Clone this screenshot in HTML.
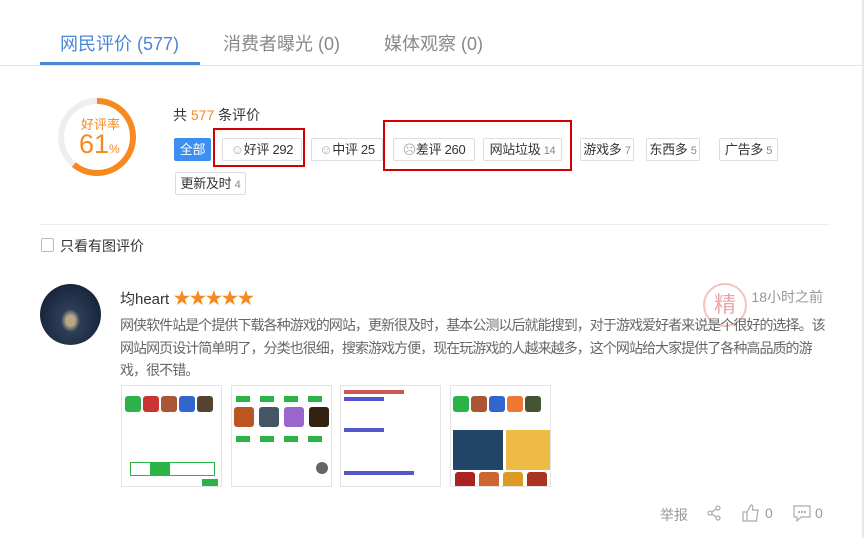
<!DOCTYPE html>
<html><head><meta charset="utf-8"><style>
*{margin:0;padding:0;box-sizing:border-box}
body{width:864px;height:538px;background:#fff;font-family:"Liberation Sans","Noto Sans CJK SC",sans-serif;position:relative;overflow:hidden;color:#333}
.a{position:absolute;white-space:nowrap}
.tab{font-size:18px;color:#888;top:30px}
.tag{position:absolute;top:138px;height:23px;border:1px solid #ddd;border-radius:2px;font-size:13px;letter-spacing:-0.3px;line-height:21px;text-align:center;color:#333;background:#fff;white-space:nowrap}
.tag small{font-size:11px;color:#888}
.tag i{font-style:normal;color:#aaa}
.red{position:absolute;border:2px solid #d40000}
.img{position:absolute;top:385px;width:101px;height:102px;border:1px solid #e4e4e4;background:#fff;overflow:hidden}
.g{position:absolute;background:#2bb34a}
.ic{position:absolute;width:16px;height:16px;border-radius:3px}
</style></head><body>
<div class="a" style="right:0;top:0;width:2px;height:538px;background:#e8e8e8"></div>
<div class="a tab" style="left:60px;color:#4a86d8">网民评价 (577)</div>
<div class="a tab" style="left:223px">消费者曝光 (0)</div>
<div class="a tab" style="left:384px">媒体观察 (0)</div>
<div class="a" style="left:0;top:65px;width:862px;height:1px;background:#e6e6e6"></div>
<div class="a" style="left:40px;top:62px;width:160px;height:3px;background:#4a86d8"></div>

<svg class="a" style="left:57px;top:97px" width="80" height="80" viewBox="0 0 80 80">
<circle cx="40" cy="40" r="36" fill="none" stroke="#eee" stroke-width="6"/>
<circle cx="40" cy="40" r="36" fill="none" stroke="#f7891e" stroke-width="6" stroke-dasharray="138 300" transform="rotate(-90 40 40)"/>
</svg>
<div class="a" style="left:81px;top:114px;font-size:13px;color:#f7891e">好评率</div>
<div class="a" style="left:79px;top:129px;font-size:27px;color:#f7891e">61<span style="font-size:12px">%</span></div>

<div class="a" style="left:173px;top:105px;font-size:14px">共 <span style="color:#f7891e">577</span> 条评价</div>
<div class="tag" style="left:174px;width:37px;background:#3d8ef0;border-color:#3d8ef0;color:#fff">全部</div>
<div class="tag" style="left:222px;width:80px"><i>☺</i>好评 292</div>
<div class="tag" style="left:311px;width:72px"><i>☺</i>中评 25</div>
<div class="tag" style="left:393px;width:82px"><i>☹</i>差评 260</div>
<div class="tag" style="left:483px;width:79px">网站垃圾 <small>14</small></div>
<div class="tag" style="left:580px;width:54px">游戏多 <small>7</small></div>
<div class="tag" style="left:646px;width:54px">东西多 <small>5</small></div>
<div class="tag" style="left:719px;width:59px">广告多 <small>5</small></div>
<div class="tag" style="left:175px;top:172px;width:71px">更新及时 <small>4</small></div>
<div class="red" style="left:213px;top:128px;width:92px;height:39px"></div>
<div class="red" style="left:383px;top:120px;width:189px;height:51px"></div>

<div class="a" style="left:40px;top:224px;width:790px;height:1px;background:#eee"></div>
<div class="a" style="left:41px;top:238px;width:13px;height:14px;border:1px solid #bbb;border-radius:2px"></div>
<div class="a" style="left:60px;top:236px;font-size:14px">只看有图评价</div>

<div class="a" style="left:40px;top:284px;width:61px;height:61px;border-radius:50%;background:radial-gradient(ellipse at 50% 60%,#b9a98a 0 10%,#2c3e55 22%,#1d2c44 60%,#0f1826)"></div>
<div class="a" style="left:120px;top:284px;font-size:15px">均heart <span style="color:#f7891e;font-size:17px;letter-spacing:-1px">★★★★★</span></div>
<div class="a" style="left:703px;top:283px;width:44px;height:44px;border:2px solid rgba(220,80,80,.35);border-radius:50%;color:rgba(210,60,60,.45);font-size:22px;text-align:center;line-height:40px">精</div>
<div class="a" style="right:41px;top:287px;font-size:14px;color:#999">18小时之前</div>
<div class="a" style="left:120px;top:314px;font-size:14px;letter-spacing:-0.95px;line-height:22.5px;color:#666">网侠软件站是个提供下载各种游戏的网站，更新很及时，基本公测以后就能搜到，对于游戏爱好者来说是个很好的选择。该<br>网站网页设计简单明了，分类也很细，搜索游戏方便，现在玩游戏的人越来越多，这个网站给大家提供了各种高品质的游<br>戏，很不错。</div>

<div class="img" style="left:121px">
<div class="ic" style="left:3px;top:10px;background:#2bb34a"></div><div class="ic" style="left:21px;top:10px;background:#c33"></div><div class="ic" style="left:39px;top:10px;background:#a53"></div><div class="ic" style="left:57px;top:10px;background:#36c"></div><div class="ic" style="left:75px;top:10px;background:#543"></div>
<div class="g" style="left:8px;top:76px;width:85px;height:14px;background:#fff;border:1px solid #2bb34a"></div><div class="g" style="left:28px;top:76px;width:20px;height:14px"></div><div class="g" style="left:80px;top:93px;width:16px;height:8px"></div>
</div>
<div class="img" style="left:231px">
<div class="g" style="left:4px;top:10px;width:14px;height:6px"></div><div class="g" style="left:28px;top:10px;width:14px;height:6px"></div><div class="g" style="left:52px;top:10px;width:14px;height:6px"></div><div class="g" style="left:76px;top:10px;width:14px;height:6px"></div>
<div class="ic" style="left:2px;top:21px;width:20px;height:20px;background:#b52"></div><div class="ic" style="left:27px;top:21px;width:20px;height:20px;background:#456"></div><div class="ic" style="left:52px;top:21px;width:20px;height:20px;background:#96c"></div><div class="ic" style="left:77px;top:21px;width:20px;height:20px;background:#321"></div>
<div class="g" style="left:4px;top:50px;width:14px;height:6px"></div><div class="g" style="left:28px;top:50px;width:14px;height:6px"></div><div class="g" style="left:52px;top:50px;width:14px;height:6px"></div><div class="g" style="left:76px;top:50px;width:14px;height:6px"></div>
<div class="a" style="left:84px;top:76px;width:12px;height:12px;border-radius:50%;background:#666"></div>
</div>
<div class="img" style="left:340px">
<div class="a" style="left:3px;top:4px;width:60px;height:4px;background:#c55"></div><div class="a" style="left:3px;top:11px;width:40px;height:4px;background:#55c"></div>
<div class="a" style="left:3px;top:42px;width:40px;height:4px;background:#55c"></div>
<div class="a" style="left:3px;top:85px;width:70px;height:4px;background:#55c"></div>
</div>
<div class="img" style="left:450px">
<div class="ic" style="left:2px;top:10px;background:#2bb34a"></div><div class="ic" style="left:20px;top:10px;background:#a53"></div><div class="ic" style="left:38px;top:10px;background:#36c"></div><div class="ic" style="left:56px;top:10px;background:#e73"></div><div class="ic" style="left:74px;top:10px;background:#453"></div>
<div class="a" style="left:2px;top:44px;width:50px;height:40px;background:#246"></div><div class="a" style="left:55px;top:44px;width:46px;height:40px;background:#eb4"></div>
<div class="ic" style="left:4px;top:86px;width:20px;background:#a22"></div><div class="ic" style="left:28px;top:86px;width:20px;background:#c63"></div><div class="ic" style="left:52px;top:86px;width:20px;background:#d92"></div><div class="ic" style="left:76px;top:86px;width:20px;background:#a32"></div>
</div>

<div class="a" style="left:660px;top:505px;font-size:14px;color:#999">举报</div>
<svg class="a" style="left:706px;top:505px" width="16" height="16" viewBox="0 0 16 16" fill="none" stroke="#aaa" stroke-width="1.2"><circle cx="12" cy="3" r="2"/><circle cx="4" cy="8" r="2"/><circle cx="12" cy="13" r="2"/><path d="M6 7l4-3M6 9l4 3"/></svg>
<svg class="a" style="left:742px;top:504px" width="18" height="18" viewBox="0 0 18 18" fill="none" stroke="#aaa" stroke-width="1.2"><path d="M1 8h4v9H1zM5 8l4-7c2 0 2 2 1.5 5H16l-1.5 11H5"/></svg>
<div class="a" style="left:765px;top:505px;font-size:14px;color:#999">0</div>
<svg class="a" style="left:793px;top:505px" width="18" height="17" viewBox="0 0 18 17" fill="none" stroke="#aaa" stroke-width="1.2"><path d="M1 1h16v11H8l-4 4v-4H1z"/><circle cx="6" cy="7" r=".5"/><circle cx="9" cy="7" r=".5"/><circle cx="12" cy="7" r=".5"/></svg>
<div class="a" style="left:815px;top:505px;font-size:14px;color:#999">0</div>
</body></html>
